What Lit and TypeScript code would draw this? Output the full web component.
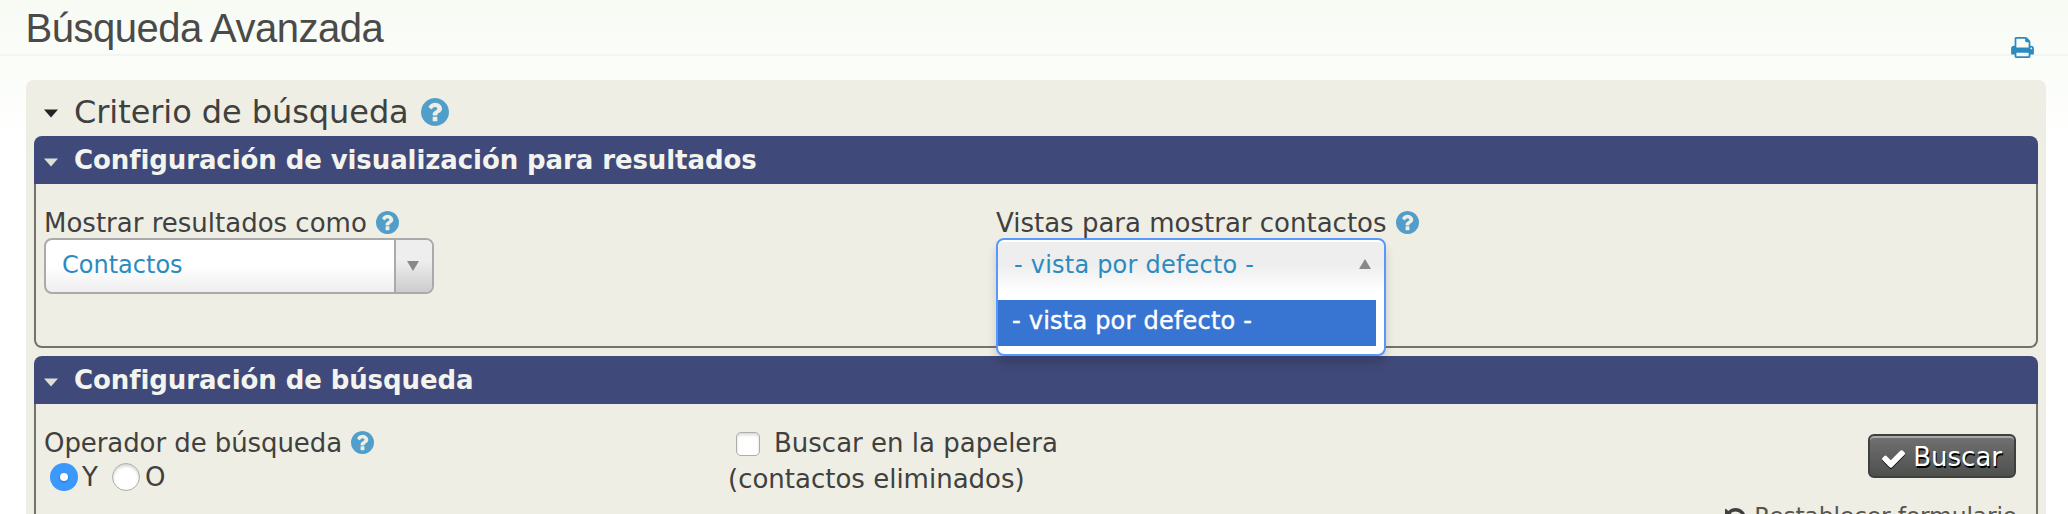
import { LitElement, html, css, svg } from "lit";
import { customElement, property } from "lit/decorators.js";

const PATHS: Record<string, string> = {
  help: "M1024 1376v-192q0-14-9-23t-23-9h-192q-14 0-23 9t-9 23v192q0 14 9 23t23 9h192q14 0 23-9t9-23zm256-672q0-88-55.5-163t-138.5-116-170-41q-243 0-371 213-15 24 8 42l132 100q7 6 19 6 16 0 25-12 53-68 86-92 34-24 86-24 48 0 85.500 26t37.500 59q0 38-20 61t-68 45q-63 28-115.500 86.500t-52.500 125.500v36q0 14 9 23t23 9h192q14 0 23-9t9-23q0-19 21.500-49.500t54.500-49.500q32-18 49-28.500t46-35 44.500-48 28-60.500 12.500-81zm384 192q0 209-103 385.500t-279.500 279.500-385.500 103-385.500-103-279.500-279.500-103-385.500 103-385.500 279.500-279.500 385.500-103 385.500 103 279.500 279.500 103 385.500z",
  check: "M1671 566q0 40-28 68l-724 724-136 136q-28 28-68 28t-68-28l-136-136-362-362q-28-28-28-68t28-68l136-136q28-28 68-28t68 28l294 295 656-657q28-28 68-28t68 28l136 136q28 28 28 68z",
  print: "M448 1536h896v-256h-896v256zm0-640h896v-384h-160q-40 0-68-28t-28-68v-160h-640v640zm1152 64q0-26-19-45t-45-19-45 19-19 45 19 45 45 19 45-19 19-45zm128 0v416q0 13-9.500 22.500t-22.500 9.500h-224v160q0 40-28 68t-68 28h-960q-40 0-68-28t-28-68v-160h-224q-13 0-22.500-9.500t-9.500-22.500v-416q0-79 56.500-135.500t135.500-56.500h64v-544q0-40 28-68t68-28h672q40 0 88 20t76 48l152 152q28 28 48 76t20 88v256h64q79 0 135.500 56.500t56.500 135.500z",
  undo: "M1664 896q0 156-61 298t-164 245-245 164-298 61q-172 0-327-72.500t-264-204.500q-7-10-6.500-22.500t8.500-20.500l137-138q10-9 25-9 16 2 23 12 73 95 179 147t225 52q104 0 198.500-40.500t163.500-109.500 109.500-163.500 40.500-198.500-40.500-198.500-109.500-163.500-163.500-109.500-198.500-40.500q-98 0-188 35.500t-160 101.500l137 138q31 30 14 69-17 40-59 40h-448q-26 0-45-19t-19-45v-448q0-42 40-59 39-17 69 14l130 129q107-101 244.500-156.500t284.500-55.500q156 0 298 61t245 164 164 245 61 298z",
};

const BOXES: Record<string, string> = {
  help: "128 128 1536 1536",
  check: "121 334 1550 1188",
  print: "64 128 1664 1536",
  undo: "128 128 1536 1536",
};

@customElement("ui-icon")
class UiIcon extends LitElement {
  @property() name = "help";
  static styles = css`
    :host { display: block; flex: none; }
    svg { display: block; width: 100%; height: 100%; fill: currentColor; overflow: visible; }
  `;
  render() {
    return html`<svg viewBox=${BOXES[this.name]}>${svg`<path d=${PATHS[this.name]}></path>`}</svg>`;
  }
}

@customElement("field-label")
class FieldLabel extends LitElement {
  static styles = css`
    :host { display: flex; height: 34px; gap: 9px; white-space: nowrap; line-height: 38px; }
    ui-icon { width: 23px; height: 23px; color: #509ec9; margin-top: 7px; }
  `;
  render() {
    return html`<slot></slot><ui-icon name="help"></ui-icon>`;
  }
}

@customElement("config-section")
class ConfigSection extends LitElement {
  @property() heading = "";
  static styles = css`
    :host { display: flex; flex-direction: column; }
    .head {
      display: flex; align-items: center; flex: none; box-sizing: border-box;
      height: 48px; padding-left: 10px; gap: 16px;
      background: #404a7a; color: #f4f4ef; border-radius: 8px 8px 0 0;
      font-weight: bold; font-size: 26px; line-height: 50px; letter-spacing: -0.09px;
    }
    .caret { width: 14px; height: 9px; margin-top: 4px; fill: #deded9; flex: none; }
    .body {
      flex: 1; box-sizing: border-box; padding: 20px 8px 0;
      border: 2px solid #72736a; border-top: 0; border-radius: 0 0 8px 8px;
    }
  `;
  render() {
    return html`
      <div class="head">
        <svg class="caret" viewBox="0 0 14 9"><path d="M0 .5h14L7 8.500z"></path></svg>
        <span>${this.heading}</span>
      </div>
      <div class="body"><slot></slot></div>
    `;
  }
}

@customElement("app-root")
class AppRoot extends LitElement {
  static styles = css`
    :host {
      display: block; box-sizing: border-box; height: 514px; overflow: hidden;
      background: linear-gradient(#f7fbf4, #fff 150px);
      font-family: "DejaVu Sans", Verdana, sans-serif; font-size: 26px; color: #40403e;
    }
    .top {
      display: flex; justify-content: space-between; box-sizing: border-box;
      height: 56px; padding: 0 34px 0 25.5px; border-bottom: 2px solid #f2f5f1;
    }
    h1 {
      margin: 0; font: 400 40px/56px "Liberation Sans", Arial, sans-serif;
      color: #4a4a48; height: 54px; letter-spacing: -0.5px;
    }
    .print { width: 23px; height: 21px; margin-top: 37px; color: #2b8bc1; }
    .panel {
      margin: 24px 22px 0 26px; padding: 0 8px; height: 520px;
      background: #eeeee5; border-radius: 8px;
    }
    .title { display: flex; height: 56px; padding-left: 10px; }
    .title .caret { width: 14px; height: 9px; margin: 29px 16px 0 0; fill: #222; flex: none; }
    .title-text { font-size: 32px; line-height: 65px; letter-spacing: -0.07px; }
    .title ui-icon { width: 28px; height: 28px; color: #509ec9; margin: 18px 0 0 12px; }
    .first { height: 212px; margin-bottom: 8px; }
    .second { height: 300px; }
    .cols { display: grid; grid-template-columns: 952px 1fr; }
    .select {
      display: flex; box-sizing: border-box; width: 390px; height: 56px;
      border: 2px solid #aaa; border-radius: 8px; overflow: hidden;
      background: linear-gradient(#fff 50%, #eee); color: #2b8bc1; font-size: 24px; line-height: 50px;
    }
    .value { flex: 1; padding-left: 16px; }
    .arrow {
      width: 36px; border-left: 2px solid #aaa; display: flex; align-items: center; justify-content: center;
      background: linear-gradient(#eee 40%, #ccc);
    }
    .tri { width: 12px; height: 10px; fill: #888; display: block; }
    .arrow .tri { margin-right: 2px; }
    .combo { position: relative; width: 390px; height: 56px; }
    .popup {
      position: absolute; inset: 0 0 auto 0; height: 118px; box-sizing: border-box; z-index: 2;
      border: 2px solid #5897fb; border-radius: 8px; background: #fff; letter-spacing: 0.22px;
      box-shadow: 0 8px 10px rgba(0, 0, 0, .15); font-size: 24px; padding-top: 2px;
    }
    .current {
      display: flex; justify-content: space-between; height: 58px; box-sizing: border-box;
      padding: 0 13px 0 16px; line-height: 47px; color: #2b8bc1;
      background: linear-gradient(#eee 0, #eee 40%, #fff 85%); border-radius: 6px 6px 0 0;
    }
    .current .tri { margin-top: 17px; }
    .option {
      height: 46px; width: 378px; box-sizing: border-box; padding-left: 14px;
      background: #3875d2; color: #fff; line-height: 43px; -webkit-text-stroke: 0.4px #fff;
    }
    .search { display: grid; grid-template-columns: 684px 1fr auto; }
    .tight { letter-spacing: -0.08px; }
    .radios { display: flex; align-items: center; height: 34px; padding-left: 6px; margin-top: 2px; }
    .radio {
      width: 28px; height: 28px; border-radius: 50%; box-sizing: border-box; flex: none;
      background: #fff; border: 1px solid #adada9; box-shadow: inset 0 2px 3px rgba(0, 0, 0, .18);
    }
    .radio.on { border: 0; box-shadow: none; background: #3b99fc; display: grid; place-items: center; }
    .dot { width: 8px; height: 8px; border-radius: 50%; background: #fff; box-shadow: 0 1px 2px #1c6dc0; }
    .y { margin: 0 14px 0 4px; line-height: 30px; }
    .o { margin-left: 5px; line-height: 30px; }
    .trash { display: flex; height: 36px; padding-left: 8px; gap: 14px; line-height: 38px; }
    .box {
      width: 24px; height: 24px; box-sizing: border-box; border-radius: 5px; background: #fff; margin-top: 8px;
      border: 1px solid #adada9; box-shadow: inset 0 2px 3px rgba(0, 0, 0, .15);
    }
    .note { line-height: 38px; }
    .actions { display: flex; flex-direction: column; align-items: flex-end; padding: 10px 12px 0 0; }
    .button {
      display: flex; box-sizing: border-box; width: 148px; height: 44px; padding: 0 12px;
      border: 2px solid #3e403e; border-radius: 6px; color: #fff; line-height: 42px;
      background: linear-gradient(#707170, #4e504e); box-shadow: inset 0 2px 0 #a9a9a9;
      text-shadow: 1px 2px 0 #000; justify-content: space-between;
    }
    .button ui-icon { width: 23px; height: 18px; margin-top: 14px; filter: drop-shadow(0 1px 0 #000); }
    .reset {
      display: flex; gap: 8px; margin: 22px -1px 0 0; color: #555550;
      line-height: 32px; font-size: 23.500px; letter-spacing: -0.2px;
    }
    .reset ui-icon { width: 21px; height: 21px; margin-top: 8px; color: #40403e; }
  `;
  render() {
    return html`
      <div class="top">
        <h1>Búsqueda Avanzada</h1>
        <ui-icon class="print" name="print"></ui-icon>
      </div>
      <div class="panel">
        <div class="title">
          <svg class="caret" viewBox="0 0 14 9"><path d="M0 .5h14L7 8.500z"></path></svg>
          <span class="title-text">Criterio de búsqueda</span>
          <ui-icon name="help"></ui-icon>
        </div>
        <config-section class="first" heading="Configuración de visualización para resultados">
          <div class="cols">
            <div>
              <field-label><span>Mostrar resultados como</span></field-label>
              <div class="select">
                <span class="value">Contactos</span>
                <span class="arrow"><svg class="tri" viewBox="0 0 12 10"><path d="M0 0h12L6 10z"></path></svg></span>
              </div>
            </div>
            <div>
              <field-label><span>Vistas para mostrar contactos</span></field-label>
              <div class="combo">
                <div class="popup">
                  <div class="current">
                    <span>- vista por defecto -</span>
                    <svg class="tri" viewBox="0 0 12 10"><path d="M0 10h12L6 0z"></path></svg>
                  </div>
                  <div class="option">- vista por defecto -</div>
                </div>
              </div>
            </div>
          </div>
        </config-section>
        <config-section class="second" heading="Configuración de búsqueda">
          <div class="search">
            <div>
              <field-label><span class="tight">Operador de búsqueda</span></field-label>
              <div class="radios">
                <span class="radio on"><span class="dot"></span></span><span class="y">Y</span>
                <span class="radio"></span><span class="o">O</span>
              </div>
            </div>
            <div>
              <div class="trash"><span class="box"></span><span>Buscar en la papelera</span></div>
              <div class="note">(contactos eliminados)</div>
            </div>
            <div class="actions">
              <div class="button"><ui-icon name="check"></ui-icon><span>Buscar</span></div>
              <div class="reset"><ui-icon name="undo"></ui-icon><span>Restablecer formulario</span></div>
            </div>
          </div>
        </config-section>
      </div>
    `;
  }
}
